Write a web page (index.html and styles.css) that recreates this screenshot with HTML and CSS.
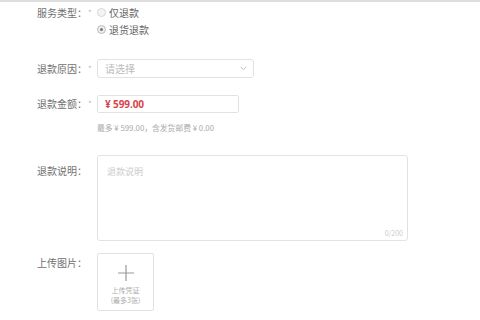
FILE: index.html
```html
<!DOCTYPE html>
<html lang="zh-CN">
<head>
<meta charset="utf-8">
<title>申请退款</title>
<link rel="stylesheet" href="styles.css">
</head>
<body>
<div class="page">
  <div class="row row-type">
    <div class="label">服务类型：</div>
    <div class="req">*</div>
    <div class="radios">
      <div class="radio"><span class="dot"></span><span>仅退款</span></div>
      <div class="radio checked"><span class="dot"></span><span>退货退款</span></div>
    </div>
  </div>

  <div class="row row-reason">
    <div class="label">退款原因：</div>
    <div class="req">*</div>
    <div class="select">
      <span class="placeholder">请选择</span>
      <svg class="chev" width="7" height="5" viewBox="0 0 7 5"><path d="M0.8 1 L3.5 3.6 L6.2 1" fill="none" stroke="#bbb" stroke-width="1"/></svg>
    </div>
  </div>

  <div class="row row-amount">
    <div class="label">退款金额：</div>
    <div class="req">*</div>
    <div class="amount-col">
      <div class="input"><span class="money">¥ 599.00</span></div>
      <div class="hint">最多 ¥ 599.00，含发货邮费 ¥ 0.00</div>
    </div>
  </div>

  <div class="row row-desc">
    <div class="label">退款说明：</div>
    <div class="req"></div>
    <div class="textarea">
      <span class="placeholder ph-desc">退款说明</span>
      <span class="counter">0/200</span>
    </div>
  </div>

  <div class="row row-upload">
    <div class="label">上传图片：</div>
    <div class="req"></div>
    <div class="upload">
      <svg class="plus" width="16" height="16" viewBox="0 0 16 16"><path d="M8 0 V16 M0 8 H16" stroke="#999" stroke-width="1.2"/></svg>
      <div class="up-text">上传凭证</div>
      <div class="up-text">(最多3张)</div>
    </div>
  </div>
</div>
</body>
</html>
```

FILE: styles.css
```css
html, body {
  margin: 0;
  padding: 0;
  background: #fff;
}
body {
  font-family: "Noto Sans CJK SC", "Noto Sans", sans-serif;
  font-size: 10px;
  color: #666;
}
.page {
  border-top: 2px solid #ddd;
  height: 318px;
  overflow: hidden;
}
.row {
  display: flex;
  align-items: flex-start;
}
.label {
  width: 87px;
  text-align: right;
  color: #707070;
  font-size: 10px;
  line-height: 17px;
  white-space: nowrap;
}
.req {
  width: 10px;
  flex: none;
  color: #bbb;
  font-size: 8px;
  line-height: 17px;
  padding-left: 1px;
  box-sizing: border-box;
}

/* service type */
.row-type { margin-top: 2px; }
.radios { display: flex; flex-direction: column; }
.radio {
  display: flex;
  align-items: center;
  gap: 3px;
  height: 17px;
  color: #666;
}
.dot {
  width: 7px;
  height: 7px;
  border: 1px solid #d6d6d6;
  border-radius: 50%;
  background: #f4f4f4;
  box-sizing: content-box;
  position: relative;
}
.radio.checked .dot {
  border-color: #bbb;
  background: #eee;
}
.radio.checked .dot::after {
  content: "";
  position: absolute;
  left: 2px; top: 2px;
  width: 3px; height: 3px;
  border-radius: 50%;
  background: #777;
}

/* reason */
.row-reason { margin-top: 21px; }
.row-reason .label, .row-reason .req { line-height: 19px; }
.select {
  width: 157px;
  height: 19px;
  border: 1px solid #e2e2e2;
  border-radius: 3px;
  box-sizing: border-box;
  display: flex;
  align-items: center;
  justify-content: space-between;
  padding: 0 6px 0 7px;
}
.placeholder { color: #bbb; font-size: 10px; }
.chev { display: block; }

/* amount */
.row-amount { margin-top: 17px; }
.row-amount .label, .row-amount .req { line-height: 18px; }
.amount-col { display: flex; flex-direction: column; }
.input {
  width: 142px;
  height: 18px;
  border: 1px solid #e2e2e2;
  border-radius: 2px;
  box-sizing: border-box;
  display: flex;
  align-items: center;
  padding-left: 7px;
}
.money {
  font-family: "Open Sans", "Noto Sans", sans-serif;
  font-weight: 700;
  font-size: 10px;
  color: #d8434a;
  white-space: pre;
  letter-spacing: -0.1px;
}
.hint {
  margin-top: 9px;
  font-size: 7.8px;
  line-height: 12px;
  color: #aaa;
  white-space: nowrap;
}

/* description */
.row-desc { margin-top: 21px; }
.row-desc .label { padding-top: 7px; }
.textarea {
  width: 311px;
  height: 86px;
  border: 1px solid #e2e2e2;
  border-radius: 3px;
  box-sizing: border-box;
  display: flex;
  flex-direction: column;
  justify-content: space-between;
  padding: 9px 4px 2px 9px;
}
.ph-desc { font-size: 9px; line-height: 14px; color: #ccc; }
.counter {
  align-self: flex-end;
  font-size: 7px;
  line-height: 10px;
  color: #ccc;
}

/* upload */
.row-upload { margin-top: 12px; }
.row-upload .label { padding-top: 2px; line-height: 16px; }
.upload {
  width: 57px;
  height: 58px;
  border: 1px solid #e2e2e2;
  border-radius: 2px;
  box-sizing: border-box;
  display: flex;
  flex-direction: column;
  align-items: center;
  padding-top: 11px;
}
.plus { display: block; margin-bottom: 4px; }
.up-text {
  font-size: 7px;
  line-height: 10px;
  color: #aaa;
  white-space: nowrap;
}
```
